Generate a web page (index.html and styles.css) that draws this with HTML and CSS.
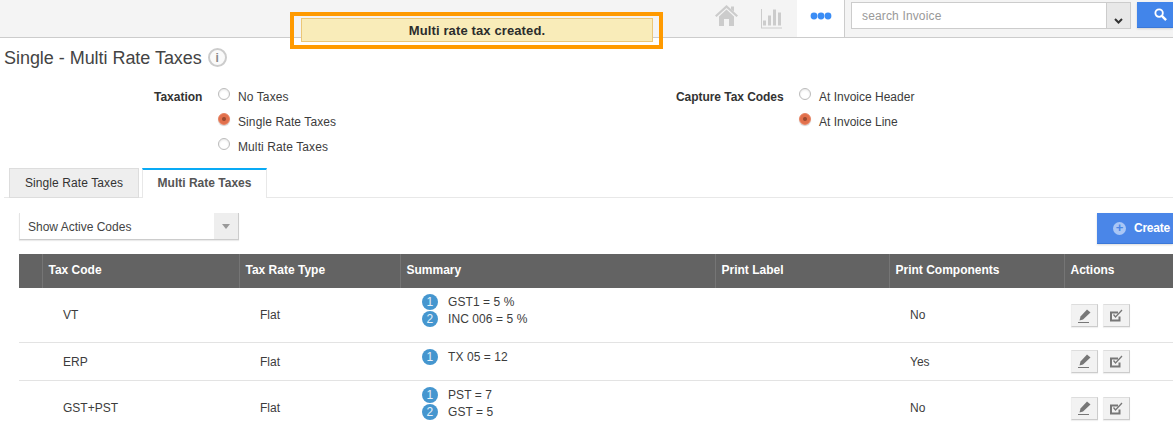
FILE: index.html
```html
<!DOCTYPE html>
<html lang="en">
<head>
<meta charset="utf-8">
<title>Single - Multi Rate Taxes</title>
<link rel="stylesheet" href="styles.css">
</head>
<body>
<header class="topbar">
  <nav class="nav">
    <a class="nav-item nav-home"><svg width="23" height="21" viewBox="0 0 23 21"><path class="ic-light" d="M11.500 0 L23 10.500 L21.500 12 L11.500 3 L1.500 12 L0 10.500 Z M16 1.500 H19 V6.500 L16 4 Z"/><path class="ic-light" d="M11.500 4.500 L19 11.500 V21 H14 V14 H9 V21 H4 V11.500 Z"/></svg></a>
    <a class="nav-item nav-chart"><svg width="21" height="20" viewBox="0 0 21 20"><path class="ic-light" d="M0 0 H1 V18.500 H21 V19.500 H0 Z M2 11.500 H5 V16.500 H2 Z M7 6.500 H10 V16.500 H7 Z M12 0.500 H15 V16.500 H12 Z M17 3.500 H20 V16.500 H17 Z"/></svg></a>
    <a class="nav-item nav-more"><svg width="22" height="8" viewBox="0 0 22 8"><circle cx="4" cy="4" r="3.400"/><circle cx="11" cy="4" r="3.400"/><circle cx="18" cy="4" r="3.400"/></svg></a>
  </nav>
  <div class="search">
    <div class="search-field">
      <span class="search-text">search Invoice</span>
      <span class="search-drop"><svg width="9" height="6" viewBox="0 0 9 6"><path d="M1 1 L4.500 4.500 L8 1" fill="none" stroke="#333" stroke-width="2"/></svg></span>
    </div>
    <button class="search-btn"><svg width="13" height="13" viewBox="0 0 14 14"><circle cx="5.500" cy="5.500" r="4" fill="none" stroke="#fff" stroke-width="2"/><path d="M8.500 8.500 L13 13" stroke="#fff" stroke-width="2.600"/></svg></button>
  </div>
</header>

<div class="toast-frame"><div class="toast">Multi rate tax created.</div></div>

<main>
  <h1 class="title">Single - Multi Rate Taxes <span class="info">i</span></h1>

  <section class="settings">
    <div class="setting setting-tax">
      <div class="setting-label">Taxation</div>
      <div class="options">
        <div class="option"><span class="radio"></span>No Taxes</div>
        <div class="option"><span class="radio on"></span>Single Rate Taxes</div>
        <div class="option"><span class="radio"></span>Multi Rate Taxes</div>
      </div>
    </div>
    <div class="setting setting-capture">
      <div class="setting-label">Capture Tax Codes</div>
      <div class="options">
        <div class="option"><span class="radio"></span>At Invoice Header</div>
        <div class="option"><span class="radio on"></span>At Invoice Line</div>
      </div>
    </div>
  </section>

  <div class="tabs">
    <div class="tab">Single Rate Taxes</div>
    <div class="tab active">Multi Rate Taxes</div>
  </div>

  <div class="toolbar">
    <div class="select">
      <span class="select-text">Show Active Codes</span>
      <span class="select-arrow"></span>
    </div>
    <button class="create"><span class="plus">+</span>Create</button>
  </div>

  <table class="grid">
    <colgroup>
      <col class="c0"><col class="c1"><col class="c2"><col class="c3"><col class="c4"><col class="c5"><col class="c6">
    </colgroup>
    <thead>
      <tr><th></th><th>Tax Code</th><th>Tax Rate Type</th><th>Summary</th><th>Print Label</th><th>Print Components</th><th>Actions</th></tr>
    </thead>
    <tbody>
      <tr class="r1">
        <td></td><td class="code">VT</td><td class="type">Flat</td>
        <td class="summary"><div class="line"><span class="num">1</span>GST1 = 5 %</div><div class="line"><span class="num">2</span>INC 006 = 5 %</div></td>
        <td></td><td class="comp">No</td>
        <td class="acts"><div class="act-wrap"><span class="act"><svg width="13" height="14" viewBox="0 0 13 14"><path class="ic-dark" d="M9 0.500 L12.500 3.500 L5 10.500 L1.500 11.500 L2.500 7.500 Z"/><path class="ic-dark" d="M0 13 H11 V14 H0 Z"/></svg></span><span class="act"><svg width="13" height="13" viewBox="0 0 13 13"><path class="ic-stroke" d="M8 3.500 H1 V11.500 H9.500 V7.500"/><path class="ic-check" d="M3.500 5.500 L5.500 8 L12 1"/></svg></span></div></td>
      </tr>
      <tr class="r2">
        <td></td><td class="code">ERP</td><td class="type">Flat</td>
        <td class="summary"><div class="line"><span class="num">1</span>TX 05 = 12</div></td>
        <td></td><td class="comp">Yes</td>
        <td class="acts"><div class="act-wrap"><span class="act"><svg width="13" height="14" viewBox="0 0 13 14"><path class="ic-dark" d="M9 0.500 L12.500 3.500 L5 10.500 L1.500 11.500 L2.500 7.500 Z"/><path class="ic-dark" d="M0 13 H11 V14 H0 Z"/></svg></span><span class="act"><svg width="13" height="13" viewBox="0 0 13 13"><path class="ic-stroke" d="M8 3.500 H1 V11.500 H9.500 V7.500"/><path class="ic-check" d="M3.500 5.500 L5.500 8 L12 1"/></svg></span></div></td>
      </tr>
      <tr class="r3">
        <td></td><td class="code">GST+PST</td><td class="type">Flat</td>
        <td class="summary"><div class="line"><span class="num">1</span>PST = 7</div><div class="line"><span class="num">2</span>GST = 5</div></td>
        <td></td><td class="comp">No</td>
        <td class="acts"><div class="act-wrap"><span class="act"><svg width="13" height="14" viewBox="0 0 13 14"><path class="ic-dark" d="M9 0.500 L12.500 3.500 L5 10.500 L1.500 11.500 L2.500 7.500 Z"/><path class="ic-dark" d="M0 13 H11 V14 H0 Z"/></svg></span><span class="act"><svg width="13" height="13" viewBox="0 0 13 13"><path class="ic-stroke" d="M8 3.500 H1 V11.500 H9.500 V7.500"/><path class="ic-check" d="M3.500 5.500 L5.500 8 L12 1"/></svg></span></div></td>
      </tr>
    </tbody>
  </table>
</main>
</body>
</html>
```

FILE: styles.css
```css
* { box-sizing: border-box; }
html, body { margin: 0; padding: 0; height: 432px; overflow: hidden; background: #fff; }
body { font-family: "Liberation Sans", Arial, sans-serif; font-size: 12px; color: #333; position: relative; }

.topbar { height: 38px; background: #f4f4f4; border-bottom: 1px solid #ccc; display: flex; justify-content: flex-end; }
.nav { display: flex; height: 37px; }
.nav-item { display: flex; align-items: center; justify-content: center; height: 37px; }
.nav-home { width: 23px; margin-right: 23px; padding-bottom: 6px; }
.nav-chart { width: 21px; margin-right: 15px; padding-bottom: 0; }
.nav-more { width: 48px; background: #fff; border-right: 1px solid #ccc; padding-bottom: 5px; fill: #3b8df5; }
.ic-light { fill: #ccc; }
.ic-dark { fill: #777; }
.ic-stroke { fill: none; stroke: #777; stroke-width: 2; }
.ic-check { fill: none; stroke: #777; stroke-width: 1.300; }

.search { display: flex; width: 328px; padding: 2px 0 0 6px; gap: 6px; }
.search-field { display: flex; flex: none; width: 280px; height: 27px; background: #fff; border: 1px solid #ccc; }
.search-text { flex: 1; padding-left: 10px; line-height: 27px; color: #999; font-size: 12px; letter-spacing: .15px; }
.search-drop { width: 24px; background: #e8e8e8; border-left: 1px solid #ccc; display: flex; justify-content: center; align-items: flex-end; padding-bottom: 4px; }
.search-btn { flex: none; width: 36px; height: 26px; padding: 0 0 0 17px; background: #4285ea; border: 0; border-bottom: 1px solid #3b78d8; display: flex; align-items: center; justify-content: flex-start; box-shadow: 0 1px 2px rgba(0,0,0,.15); }

.toast-frame { position: absolute; left: 290px; top: 12px; width: 373px; height: 37px; border: 4px solid #ff9a00; padding: 2px 6px 0 7px; }
.toast { height: 24px; background: #f9ecb9; border: 1px solid #ecc777; text-align: center; font-weight: bold; font-size: 13px; line-height: 23px; color: #2c2c2c; letter-spacing: .12px; }

.title { margin: 0; padding: 8px 0 0 4px; height: 46px; font-family: "Liberation Sans", sans-serif; font-weight: normal; font-size: 18px; letter-spacing: -.04px; line-height: 24px; color: #444; display: flex; align-items: flex-start; white-space: pre; }
.info { display: inline-flex; align-items: center; justify-content: center; width: 19px; height: 19px; margin: 2px 0 0 1px; border: 2px solid #ccc; border-radius: 50%; background: #fafafa; font-family: "Liberation Sans", sans-serif; font-weight: bold; font-size: 12px; color: #888; }

.settings { display: flex; height: 84px; }
.setting { display: flex; }
.setting-tax { width: 676px; padding-left: 154px; }
.setting-label { font-weight: bold; line-height: 27px; height: 25px; color: #333; }
.setting-tax .setting-label { width: 64px; }
.setting-capture .setting-label { width: 123px; letter-spacing: -.05px; }
.options { display: flex; flex-direction: column; }
.option { height: 25px; line-height: 27px; display: flex; color: #3c3c3c; }
.setting-tax .option { letter-spacing: .1px; }
.radio { width: 12px; height: 12px; margin: 4px 8px 0 0; border: 1px solid #bbb; border-radius: 50%; background: #fff; box-shadow: inset 0 1px 2px rgba(0,0,0,.1); flex: none; }
.radio.on { background: radial-gradient(circle, #9c4a30 0 1.500px, #e2704c 2.500px); border-color: #e6805f; box-shadow: 0 1px 1px rgba(0,0,0,.2); }

.tabs { display: flex; gap: 3px; height: 30px; margin-left: 4px; padding-left: 5px; border-bottom: 1px solid #e8e8e8; }
.tab { height: 30px; width: 130px; background: #eee; border: 1px solid #ddd; border-bottom: 1px solid #ddd; text-align: center; line-height: 29px; color: #333; letter-spacing: .1px; }
.tab.active { width: 125px; height: 30px; background: #fff; border: 1px solid #e8e8e8; border-bottom: 0; border-top: 2px solid #09aaf5; font-weight: bold; color: #555; line-height: 27px; letter-spacing: 0; }

.toolbar { display: flex; justify-content: space-between; align-items: flex-start; height: 56px; padding: 15px 0 0 19px; }
.select { display: flex; width: 220px; height: 27px; background: #fff; border-bottom: 1px solid #ccc; border-left: 1px solid #e4e4e4; border-right: 1px solid #ccc; box-shadow: 0 1px 1px rgba(0,0,0,.08); }
.select-text { flex: 1; padding-left: 8px; line-height: 28px; color: #444; }
.select-arrow { width: 24px; background: #eee; position: relative; }
.select-arrow::after { content: ""; position: absolute; left: 8px; top: 11px; border: 4px solid transparent; border-top: 5px solid #999; border-bottom: 0; }
.create { width: 76px; height: 31px; padding: 0 0 0 16px; background: #4a86e8; border: 0; border-bottom: 1px solid #3b78d8; color: #fff; font-family: inherit; font-size: 12px; font-weight: bold; letter-spacing: -.25px; text-align: left; display: flex; align-items: center; box-shadow: 0 1px 2px rgba(0,0,0,.15); white-space: nowrap; }
.plus { width: 13px; height: 13px; margin-right: 8px; border-radius: 50%; background: #a9c6f5; color: #4a86e8; font-size: 13px; line-height: 12px; text-align: center; flex: none; }

.grid { margin-left: 19px; width: 1154px; table-layout: fixed; border-collapse: collapse; }
.c0 { width: 23px; } .c1 { width: 197px; } .c2 { width: 161px; } .c3 { width: 315px; } .c4 { width: 174px; } .c5 { width: 175px; } .c6 { width: 109px; }
.grid th { height: 34px; background: #636363; color: #fff; text-align: left; padding: 0 0 2px 6px; font-size: 12px; border-left: 1px solid #757575; }
.grid th:first-child { border-left: 0; }
.grid td { padding: 0; color: #3c3c3c; border-bottom: 1px solid #e3e3e3; vertical-align: top; }
.r1 td { height: 54px; } .r2 td { height: 38px; } .r3 td { height: 52px; border-bottom: 0; }
.code, .type, .comp { line-height: 14px; }
.grid .code, .grid .type, .grid .comp { padding-left: 21px; padding-top: 20px; }
.grid .r2 .code, .grid .r2 .type, .grid .r2 .comp { padding-top: 12px; }
.grid .summary { padding: 6px 0 0 22px; letter-spacing: .08px; }
.grid .r1 .summary { padding-top: 5px; }
.line { display: flex; align-items: center; height: 17px; }
.num { width: 16px; height: 16px; margin-right: 10px; border-radius: 50%; background: #4596cf; color: #e8f2fa; text-align: center; line-height: 16px; font-size: 12px; flex: none; }
.grid .acts { padding: 16px 0 0 7px; }
.grid .r2 .acts { padding-top: 7px; }
.act-wrap { display: flex; gap: 5px; }
.act { width: 27px; height: 23px; background: #f2f2f2; border: 1px solid #ccc; border-top-color: #ddd; border-left-color: #eee; display: flex; align-items: center; justify-content: center; box-shadow: 0 1px 1px rgba(0,0,0,.06); }
```
